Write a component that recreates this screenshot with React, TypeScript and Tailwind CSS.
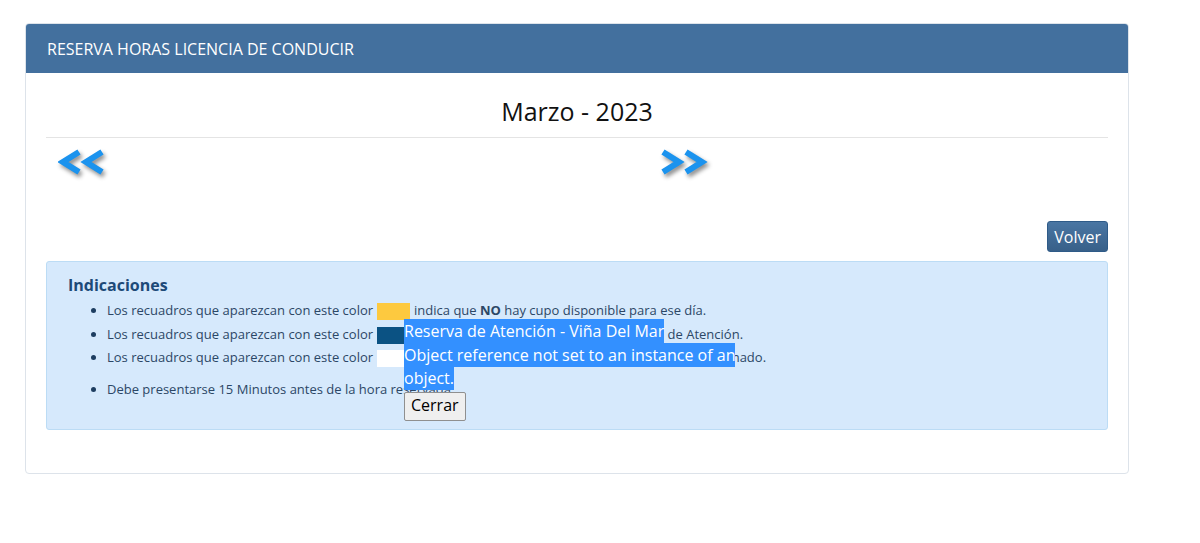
import React from "react";

function Chevrons({ dir }: { dir: "left" | "right" }) {
  const pts =
    dir === "left"
      ? ["21,3 5,13 21,23", "44,3 28,13 44,23"]
      : ["5,3 21,13 5,23", "28,3 44,13 28,23"];
  return (
    <svg
      width="50"
      height="28"
      viewBox="0 0 50 28"
      className="drop-shadow-[2px_3px_2px_rgba(0,0,0,0.45)]"
    >
      {pts.map((p) => (
        <polyline
          key={p}
          points={p}
          fill="none"
          stroke="#1b93ee"
          strokeWidth="6"
          strokeLinejoin="miter"
        />
      ))}
    </svg>
  );
}

function Swatch({ tone }: { tone: string }) {
  return <span className={`mx-[4px] inline-block h-[17px] w-[33px] align-middle ${tone}`} />;
}

export default function App() {
  return (
    <div className="min-h-[543px] bg-white pl-[25px] pt-[23px] font-['Open_Sans',sans-serif] text-[#333]">
      <div className="w-[1104px] rounded-[4px] border border-[#dde3ea] bg-white">
        <div className="flex h-[49px] items-center rounded-t-[3px] bg-[#43709e] px-[21px] text-[16px] text-white">
          RESERVA HORAS LICENCIA DE CONDUCIR
        </div>

        <div className="px-[20px] pb-[43px] pt-[22px]">
          <h1 className="text-center text-[25px] leading-[32px] text-[#111]">Marzo - 2023</h1>
          <hr className="mt-[10px] border-[#e4e4e4]" />

          <div className="flex pt-[11px]">
            <div className="w-[612px] pl-[12px]">
              <Chevrons dir="left" />
            </div>
            <div>
              <Chevrons dir="right" />
            </div>
          </div>

          <div className="mt-[44px] flex justify-end">
            <button className="h-[31px] rounded-[3px] border border-[#2f5b88] bg-gradient-to-b from-[#4a76a3] to-[#386089] px-[6px] text-[16px] text-white">
              Volver
            </button>
          </div>

          <div className="relative mt-[9px] rounded-[3px] border border-[#bcdcf5] bg-[#d6e9fc] pb-[28px] pl-[21px] pt-[12px] text-[#2c4766]">
            <h2 className="text-[16px] font-bold leading-[22px] text-[#1d4a78]">Indicaciones</h2>
            <ul className="mt-[3px] list-disc pl-[39px] text-[13px] leading-[23.5px] marker:text-[#1d3d60]">
              <li>
                Los recuadros que aparezcan con este color
                <Swatch tone="bg-[#fdc93f]" />
                indica que <b>NO</b> hay cupo disponible para ese día.
              </li>
              <li>
                Los recuadros que aparezcan con este color
                <Swatch tone="bg-[#0b5283]" />
                indica que hay cupo disponible para hora de Atención.
              </li>
              <li>
                Los recuadros que aparezcan con este color
                <Swatch tone="bg-white" />
                indica que el día no se encuentra habilitado, ni terminado.
              </li>
              <li className="mt-[8px]">Debe presentarse 15 Minutos antes de la hora reservada.</li>
            </ul>

            <div className="absolute left-[357px] top-[58px] w-[340px] text-[16px] leading-[23.5px]">
              <p>
                <span className="bg-[#3390ff] py-[1px] text-white">Reserva de Atención - Viña Del Mar</span>
              </p>
              <p>
                <span className="bg-[#3390ff] py-[1px] text-white">
                  Object reference not set to an instance of an object.
                </span>
              </p>
              <button className="mt-[1px] h-[29px] rounded-[2px] border border-[#8f8f8f] bg-[#efefef] px-[6px] text-[16px] text-black">
                Cerrar
              </button>
            </div>
          </div>
        </div>
      </div>
    </div>
  );
}
